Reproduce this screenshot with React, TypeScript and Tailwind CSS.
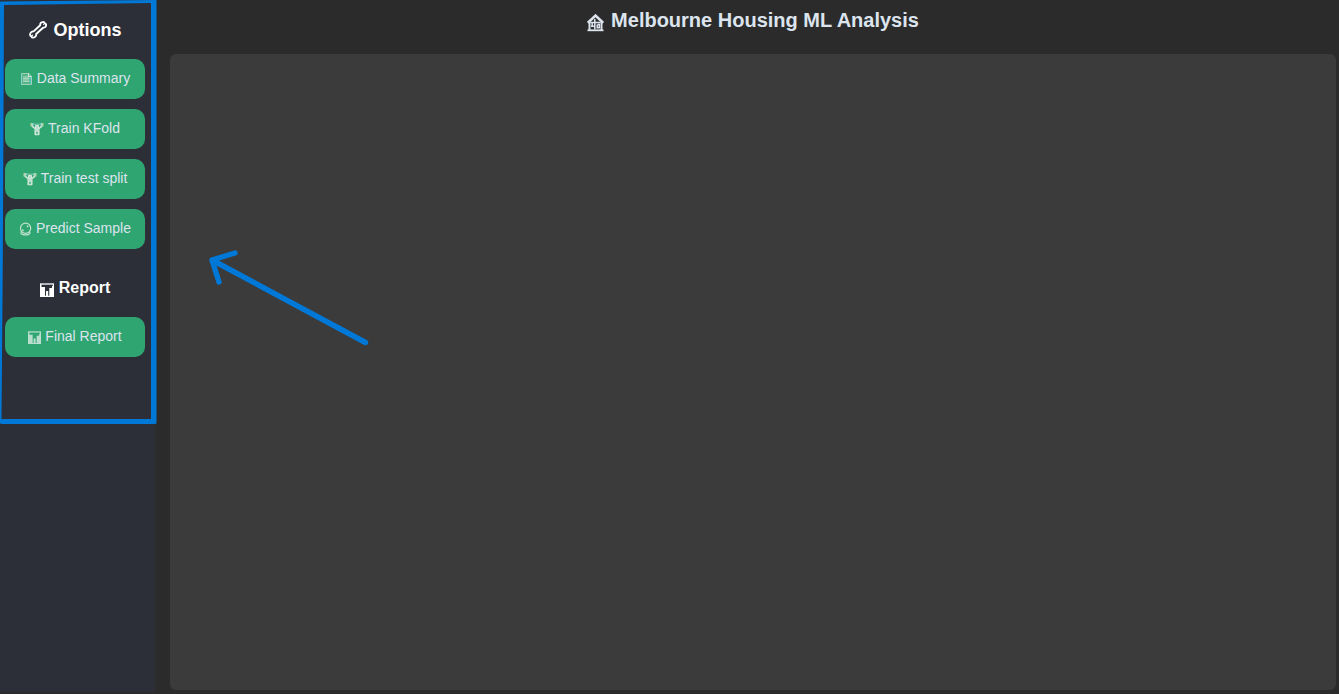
import type { ReactNode } from "react";

function WrenchIcon() {
  return (
    <svg viewBox="0 0 18 18" className="h-[18px] w-[18px] shrink-0" fill="none" stroke="currentColor" strokeWidth="1.9" strokeLinejoin="round" strokeLinecap="round" aria-hidden="true">
      <path d="M4.6 10.4 11.2 4.3C11 2.4 12.2 1 13.9 1.1C15 .9 15.6 1.6 15.7 2.2C16.6 2.4 17.2 3.2 17.1 4.2C17 5.8 15.6 6.9 14 6.7L7.2 13C7.5 14.9 6.1 16.6 4.3 16.6C3.2 16.7 2.6 16.1 2.4 15.4C1.5 15.2 1 14.4 1.1 13.4C1.3 11.5 2.8 10.2 4.6 10.4Z" />
      <path d="M2.4 15.4 3.6 14.2M15.7 2.2 14.6 3.3" strokeWidth="1.2" />
    </svg>
  );
}

function HouseIcon() {
  return (
    <svg viewBox="0 0 17 18" className="h-[18px] w-[17px] shrink-0" fill="none" stroke="currentColor" aria-hidden="true">
      <path d="M.8 8.8 8.5 1.6 16.2 8.8" strokeWidth="2.6" />
      <path d="M2.5 8V16M14.5 8V16" strokeWidth="2" />
      <path d="M.5 16.3H16.5" strokeWidth="1.8" />
      <path d="M3.5 8.5H13.5M7.8 5V15.5M5.2 8.5V12.2H8M10.5 10.5H12.3V13.7H10.2V10.5M4 12.2H7" strokeWidth="1.5" />
    </svg>
  );
}

function PageIcon() {
  return (
    <svg viewBox="0 0 13 14" className="h-[14px] w-[13px] shrink-0" aria-hidden="true">
      <path d="M1.5 1.5H8.8L11.5 4.2V12.5H1.5Z" fill="#55b58a" stroke="#a5cfb4" />
      <path d="M3 4H9V10H3Z" fill="#86c8a6" />
      <path d="M8.5 1.5V4.5H11.5" fill="none" stroke="#d5ead9" />
      <path d="M3 6.5H9.5M3 9.5H9.5" stroke="#a9d8bf" />
      <path d="M1.5 2V12.5" stroke="#8ed0d4" />
      <path d="M10.5 5V12.5" stroke="#4ec5c5" />
    </svg>
  );
}

function LifterIcon() {
  return (
    <svg viewBox="0 0 14 14" className="h-[14px] w-[14px] shrink-0" fill="none" strokeLinejoin="round" aria-hidden="true">
      <path d="M1.2 1V4.5M12.8 1V4.5" stroke="#c9d8a8" strokeWidth="1.3" />
      <path d="M2.7 1V4.5M11.3 1V4.5" stroke="#a5dbe0" strokeWidth="1.3" />
      <path d="M3 2.2H11" stroke="#8fcdb0" />
      <path d="M2 4.2 5.2 6.7V12.5H8.8V6.7L12 4.2" stroke="#d3e6d8" strokeWidth="1.5" />
      <path d="M5.5 3.5H8.5V6.5H5.5Z" fill="#b8dccf" stroke="#d5e8dc" />
      <path d="M5.5 6.5H8.5V10H5.5Z" fill="#b9dfcf" />
      <path d="M7 10V12.5" stroke="#8fcdb0" />
    </svg>
  );
}

function CrystalBallIcon() {
  return (
    <svg viewBox="0 0 13 14" className="h-[14px] w-[13px] shrink-0" fill="none" stroke="#c4e2d0" strokeWidth="1.2" aria-hidden="true">
      <circle cx="6.6" cy="6.2" r="5.1" />
      <path d="M2 9.3 2.2 11.8 4.5 12.8H8.5L10.6 11.8 11 9.6" />
      <path d="M8 3.6 9.3 5M3.2 7.6 4.6 8.8" stroke="#e2ead0" />
    </svg>
  );
}

function ChartIcon({ className }: { className: string }) {
  return (
    <svg viewBox="0 0 14 14" className={className} aria-hidden="true">
      <path fill="currentColor" fillOpacity=".65" d="M0 0H14V2H0Z" />
      <path fill="currentColor" d="M0 1H1.5V4H5V12.8H6V8H8.2V12.8H9.3V5H12V3H12.8V1H14V14H0Z" />
      <path stroke="currentColor" strokeOpacity=".4" d="M2 4V13M12.3 4V13" />
    </svg>
  );
}

function SidebarButton({ icon, children }: { icon: ReactNode; children: ReactNode }) {
  return (
    <button
      type="button"
      className="flex h-10 w-full items-center justify-center gap-1 rounded-[10px] bg-[#2fa572] text-sm text-[#dce4ee] hover:bg-[#106a43]"
    >
      <span>{icon}</span>
      <span className="whitespace-nowrap pb-0.5">{children}</span>
    </button>
  );
}

function Annotations() {
  return (
    <svg
      className="pointer-events-none absolute left-0 top-0 h-[430px] w-[375px]"
      viewBox="0 0 375 430"
      fill="none"
      stroke="#0078d7"
      strokeLinecap="round"
      strokeLinejoin="round"
      aria-hidden="true"
    >
      <path fill="#0078d7" stroke="none" d="M0 1.5 156.5 0V423Q156.5 424 155 424H1Q0 424 0 422V419H151V3L4 5 2.8 260 1.5 419H0Z" />
      <path d="M365.5 342.5 212 260M235 253 212 260 219 282" strokeWidth="5.4" />
    </svg>
  );
}

export default function App() {
  return (
    <div className="relative flex min-h-screen bg-[#2b2b2b] pb-0.5 font-['Liberation_Sans',Arial,sans-serif]">
      <aside className="w-[155px] shrink-0 bg-[#2c2f38] pl-[5px] pr-2.5 pt-5">
        <h2 className="flex h-5 items-center justify-center gap-[7px] text-lg font-bold text-white">
          <WrenchIcon />
          Options
        </h2>
        <nav aria-label="Options" className="mt-[19px] flex flex-col gap-2.5">
          <SidebarButton icon={<PageIcon />}>Data Summary</SidebarButton>
          <SidebarButton icon={<LifterIcon />}>Train KFold</SidebarButton>
          <SidebarButton icon={<LifterIcon />}>Train test split</SidebarButton>
          <SidebarButton icon={<CrystalBallIcon />}>Predict Sample</SidebarButton>
        </nav>
        <h2 className="mt-7 flex h-[22px] items-center justify-center gap-[5px] text-base font-bold text-white">
          <ChartIcon className="mt-1 h-[14px] w-[14px] shrink-0" />
          Report
        </h2>
        <nav aria-label="Report" className="mt-[18px]">
          <SidebarButton icon={<ChartIcon className="h-[13px] w-[13px] shrink-0 text-[#b9dece]" />}>Final Report</SidebarButton>
        </nav>
      </aside>
      <main className="flex min-w-0 flex-1 flex-col pb-0.5 pl-[15px] pr-[3px] pt-2.5">
        <h1 className="flex h-5 items-center justify-center gap-[7px] text-xl font-bold text-[#dce4ee]">
          <span className="pt-1.5">
            <HouseIcon />
          </span>
          Melbourne Housing ML Analysis
        </h1>
        <section aria-label="Results" className="mt-6 flex-1 rounded-md bg-[#3b3b3b]" />
      </main>
      <Annotations />
    </div>
  );
}
